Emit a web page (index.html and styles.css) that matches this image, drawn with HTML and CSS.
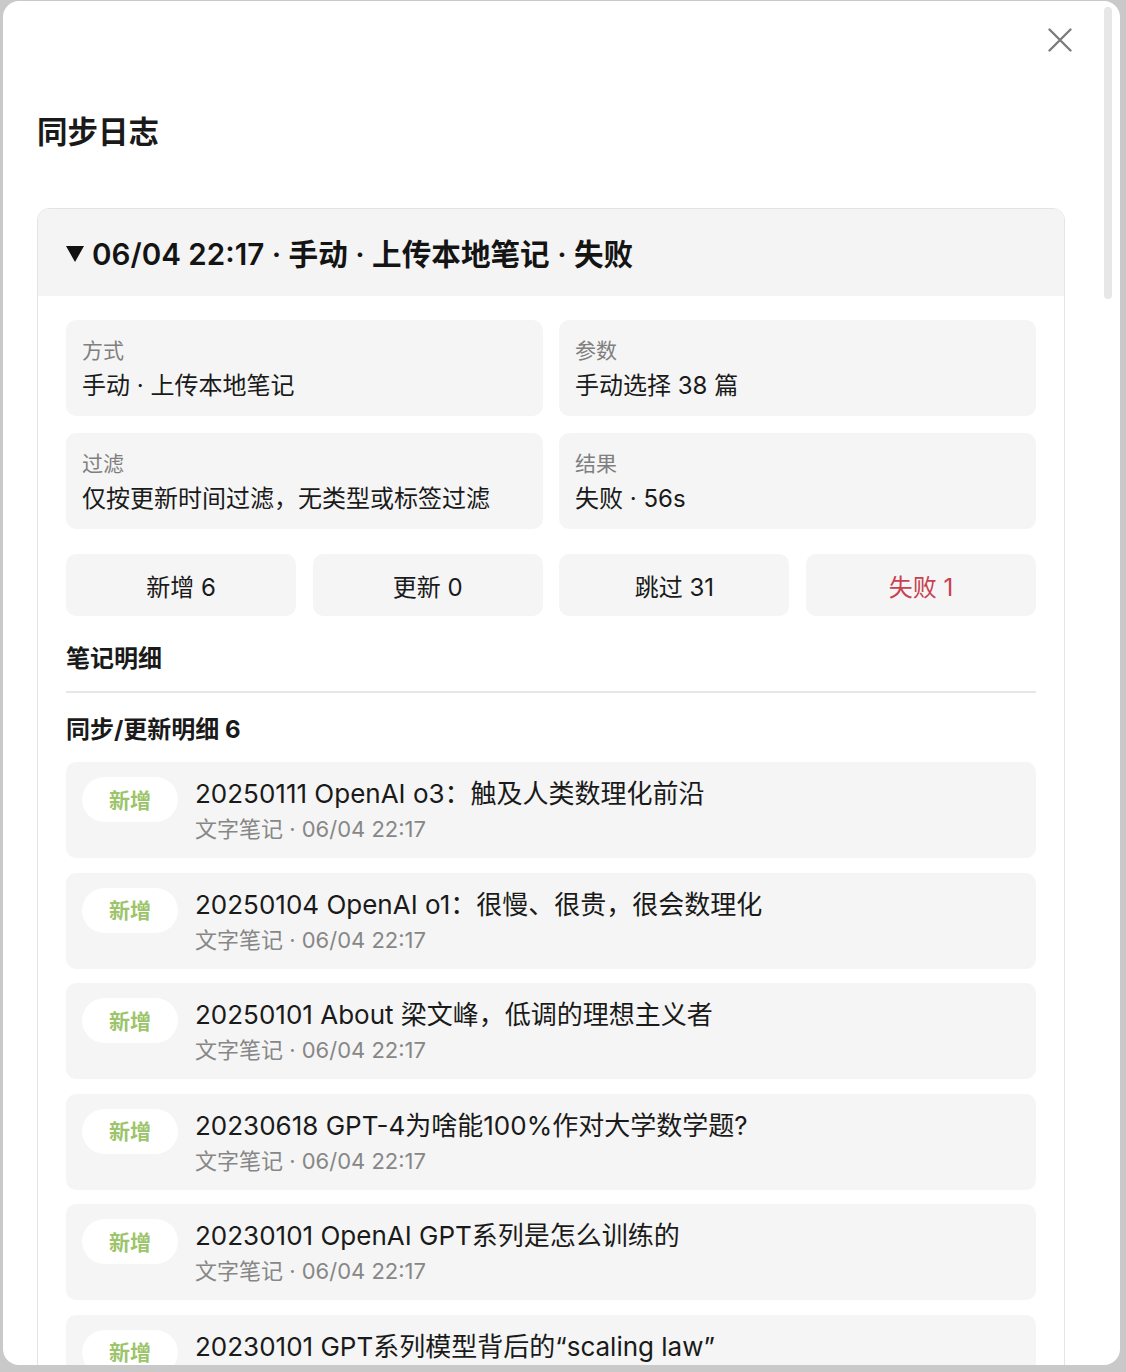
FILE: index.html
```html
<!DOCTYPE html>
<html lang="zh-CN">
<head>
<meta charset="utf-8">
<title>同步日志</title>
<link rel="stylesheet" href="styles.css">
</head>
<body>
<div class="modal">
  <button class="close" aria-label="关闭">
    <svg width="24" height="24" viewBox="0 0 24 24"><path d="M1.5 1.5 L22.5 22.5 M22.5 1.5 L1.5 22.5" stroke="#7a7a7a" stroke-width="2.3" stroke-linecap="round" fill="none"/></svg>
  </button>
  <div class="scroll-thumb"></div>
  <h1 class="title">同步日志</h1>
  <section class="card">
    <div class="card-head"><span class="tri"></span>06/04 22:17 · 手动 · 上传本地笔记 · 失败</div>
    <div class="card-body">
      <div class="info-grid">
        <div class="info"><div class="label">方式</div><div class="value">手动 · 上传本地笔记</div></div>
        <div class="info"><div class="label">参数</div><div class="value">手动选择 38 篇</div></div>
        <div class="info"><div class="label">过滤</div><div class="value">仅按更新时间过滤，无类型或标签过滤</div></div>
        <div class="info"><div class="label">结果</div><div class="value">失败 · 56s</div></div>
      </div>
      <div class="stats">
        <div class="stat">新增 6</div>
        <div class="stat">更新 0</div>
        <div class="stat">跳过 31</div>
        <div class="stat fail">失败 1</div>
      </div>
      <h2 class="section">笔记明细</h2>
      <div class="divider"></div>
      <h3 class="sub">同步/更新明细 6</h3>
      <ul class="list">
        <li class="item"><span class="badge">新增</span><div class="txt"><div class="name">20250111 OpenAI o3：触及人类数理化前沿</div><div class="meta">文字笔记 · 06/04 22:17</div></div></li>
        <li class="item"><span class="badge">新增</span><div class="txt"><div class="name">20250104 OpenAI o1：很慢、很贵，很会数理化</div><div class="meta">文字笔记 · 06/04 22:17</div></div></li>
        <li class="item"><span class="badge">新增</span><div class="txt"><div class="name">20250101 About 梁文峰，低调的理想主义者</div><div class="meta">文字笔记 · 06/04 22:17</div></div></li>
        <li class="item"><span class="badge">新增</span><div class="txt"><div class="name">20230618 GPT-4为啥能100%作对大学数学题?</div><div class="meta">文字笔记 · 06/04 22:17</div></div></li>
        <li class="item"><span class="badge">新增</span><div class="txt"><div class="name">20230101 OpenAI GPT系列是怎么训练的</div><div class="meta">文字笔记 · 06/04 22:17</div></div></li>
        <li class="item"><span class="badge">新增</span><div class="txt"><div class="name">20230101 GPT系列模型背后的“scaling law”</div><div class="meta">文字笔记 · 06/04 22:17</div></div></li>
      </ul>
    </div>
  </section>
</div>
</body>
</html>
```

FILE: styles.css
```css
* { box-sizing: border-box; }
html, body { margin: 0; padding: 0; }
body {
  background: #c9c9c9;
  font-family: Inter, "Noto Sans CJK SC", sans-serif;
  color: #1c1c1e;
  height: 1372px;
  overflow: hidden;
}
.modal {
  position: relative;
  margin: 1px 6px 0 3px;
  height: 1364px;
  background: #fff;
  border-radius: 16px;
  overflow: hidden;
  padding: 111px 55px 0 34px;
}
.close {
  position: absolute;
  top: 27px;
  right: 48px;
  width: 24px;
  height: 24px;
  padding: 0;
  border: 0;
  background: none;
}
.close svg { display: block; }
.scroll-thumb {
  position: absolute;
  top: 6px;
  right: 8px;
  width: 8px;
  height: 292px;
  background: #e7e7e7;
  border-radius: 4px;
}
.title {
  margin: 0;
  font-size: 30.5px;
  line-height: 40px;
  font-weight: 700;
  color: #1a1a1a;
}
.card {
  margin-top: 56px;
  border: 1px solid #e4e4e4;
  border-radius: 12px;
  overflow: hidden;
}
.card-head {
  height: 87px;
  background: #f4f4f4;
  display: flex;
  align-items: center;
  padding-left: 28px;
  font-size: 29.6px;
  font-weight: 600;
  color: #141414;
}
.tri {
  display: inline-block;
  width: 0;
  height: 0;
  border-left: 9px solid transparent;
  border-right: 9px solid transparent;
  border-top: 16px solid #111;
  margin-right: 8px;
  margin-top: 2px;
}
.card-body {
  padding: 24px 28px 0 28px;
}
.info-grid {
  display: grid;
  grid-template-columns: 1fr 1fr;
  column-gap: 16px;
  row-gap: 17px;
}
.info {
  height: 96px;
  background: #f5f5f5;
  border-radius: 10px;
  padding: 16px 16px 0;
}
.label {
  font-size: 21px;
  line-height: 30px;
  color: #7f7f7f;
}
.value {
  font-size: 24px;
  line-height: 40px;
  color: #1a1a1a;
}
.stats {
  margin-top: 25px;
  display: grid;
  grid-template-columns: repeat(4, 1fr);
  gap: 16.5px;
}
.stat {
  height: 62px;
  background: #f5f5f5;
  border-radius: 10px;
  display: flex;
  align-items: center;
  justify-content: center;
  font-size: 24px;
  color: #1a1a1a;
}
.stat.fail { color: #c9404f; }
.section {
  margin: 25px 0 0;
  font-size: 24px;
  line-height: 36px;
  font-weight: 700;
  color: #1a1a1a;
}
.divider {
  margin-top: 14px;
  height: 2px;
  background: #e6e6e6;
}
.sub {
  margin: 19px 0 0;
  font-size: 24px;
  line-height: 36px;
  font-weight: 700;
  color: #1a1a1a;
}
.list {
  list-style: none;
  margin: 14px 0 0;
  padding: 0;
  display: flex;
  flex-direction: column;
  gap: 14.6px;
}
.item {
  height: 96px;
  background: #f5f5f5;
  border-radius: 10px;
  display: flex;
  align-items: flex-start;
  padding: 15px 16px 0;
  gap: 17px;
}
.badge {
  flex: none;
  width: 96px;
  height: 45px;
  border-radius: 23px;
  background: #fff;
  color: #9cc46a;
  font-size: 21px;
  font-weight: 700;
  display: flex;
  align-items: center;
  justify-content: center;
  padding-bottom: 2px;
}
.name {
  font-size: 26px;
  line-height: 34px;
  color: #1a1a1a;
}
.meta {
  font-size: 22px;
  line-height: 36px;
  color: #878787;
}
```
